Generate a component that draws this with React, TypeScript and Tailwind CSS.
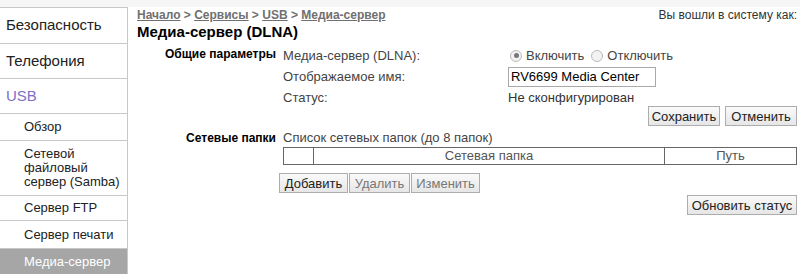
import React from "react";

const font = { fontFamily: '"Liberation Sans", Arial, sans-serif' };

function Btn({ children, dim, w }: { children: React.ReactNode; dim?: boolean; w: string }) {
  return (
    <button
      className={
        "h-[20px] px-0 border border-[#adadad] bg-gradient-to-b from-[#fafafa] to-[#e6e6e6] text-[13px] leading-none text-center " +
        w +
        (dim ? " text-[#777]" : " text-[#222]")
      }
    >
      {children}
    </button>
  );
}

function Radio({ on }: { on?: boolean }) {
  return (
    <span className="inline-flex w-[12px] h-[12px] rounded-full border border-[#bbb] bg-[#f2f2f2] items-center justify-center">
      {on && <span className="w-[5px] h-[5px] rounded-full bg-[#777]" />}
    </span>
  );
}

export default function App() {
  return (
    <div className="w-[800px] h-[278px] bg-white overflow-hidden" style={font}>
      <div className="h-[7px] bg-[#f6f6f6]" />
      <div className="flex">
        <div className="w-[128px] shrink-0 self-start border-r border-[#c8c8c8] border-t border-t-[#c8c8c8]">
          <div className="h-[36px] flex items-center border-b border-[#c8c8c8] pl-[6px] text-[15px] text-[#222]">Безопасность</div>
          <div className="h-[35px] flex items-center border-b border-[#c8c8c8] pl-[6px] text-[15px] text-[#222]">Телефония</div>
          <div className="h-[35px] flex items-center border-b border-[#c8c8c8] pl-[6px] text-[15px] text-[#7b70c4]">USB</div>
          <div className="h-[27px] flex items-center border-b border-[#c8c8c8] pl-[24px] text-[13px] text-[#222]">Обзор</div>
          <div className="h-[55px] flex items-center border-b border-[#c8c8c8] pl-[24px] pr-[1px] text-[13px] leading-[14px] text-[#222]">
            Сетевой файловый сервер (Samba)
          </div>
          <div className="h-[25px] flex items-center border-b border-[#c8c8c8] pl-[24px] text-[13px] text-[#222]">Сервер FTP</div>
          <div className="h-[28px] flex items-center border-b border-[#c8c8c8] pl-[24px] text-[13px] text-[#222]">Сервер печати</div>
          <div className="h-[25px] flex items-center pl-[24px] text-[13px] bg-[#a6a6a6] text-white">Медиа-сервер</div>
        </div>
        <div className="flex-1 pl-[9px] pr-[3px] text-[13px] text-[#444]">
          <div className="flex justify-between items-center h-[16px]">
            <div className="text-[12px] font-bold text-[#707070]">
              <span className="underline">Начало</span> &gt; <span className="underline">Сервисы</span> &gt;{" "}
              <span className="underline">USB</span> &gt; <span className="underline">Медиа-сервер</span>
            </div>
            <div className="text-[12px] text-[#333]">Вы вошли в систему как:</div>
          </div>
          <div className="text-[15px] font-bold text-black leading-[18px]">Медиа-сервер (DLNA)</div>

          <div className="grid grid-cols-[139px_1fr] gap-x-[7px] mt-[4px]">
            <div className="text-right font-bold text-[12px] text-black leading-[18px]">Общие параметры</div>
            <div className="grid grid-cols-[225px_1fr] auto-rows-[21px] items-center">
              <div>Медиа-сервер (DLNA):</div>
              <div className="flex items-center gap-[4px] pl-[2px]">
                <Radio on />
                <span className="mr-[3px]">Включить</span>
                <Radio />
                <span>Отключить</span>
              </div>
              <div>Отображаемое имя:</div>
              <div>
                <div className="w-[148px] h-[20px] border border-[#a9a9a9] px-[2px] text-black leading-[18px]">RV6699 Media Center</div>
              </div>
              <div>Статус:</div>
              <div className="text-[#333]">Не сконфигурирован</div>
            </div>
          </div>
          <div className="flex justify-end gap-[5px] -mt-[2px]">
            <Btn w="w-[72px]">Сохранить</Btn>
            <Btn w="w-[72px]">Отменить</Btn>
          </div>

          <div className="grid grid-cols-[139px_1fr] gap-x-[7px] mt-[3px]">
            <div className="text-right font-bold text-[12px] text-black leading-[18px]">Сетевые папки</div>
            <div>
              <div className="leading-[18px]">Список сетевых папок (до 8 папок)</div>
              <div className="grid grid-cols-[30px_351px_1fr] border border-[#666] h-[18px] text-[#555] leading-[16px] text-center">
                <div className="border-r border-[#666]" />
                <div className="border-r border-[#666]">Сетевая папка</div>
                <div>Путь</div>
              </div>
            </div>
          </div>
          <div className="flex ml-[142px] mt-[8px] gap-[1px]">
            <Btn w="w-[69px]">Добавить</Btn>
            <Btn dim w="w-[61px]">Удалить</Btn>
            <Btn dim w="w-[69px]">Изменить</Btn>
          </div>
          <div className="flex justify-end mt-[2px]">
            <Btn w="w-[110px]">Обновить статус</Btn>
          </div>
        </div>
      </div>
    </div>
  );
}
